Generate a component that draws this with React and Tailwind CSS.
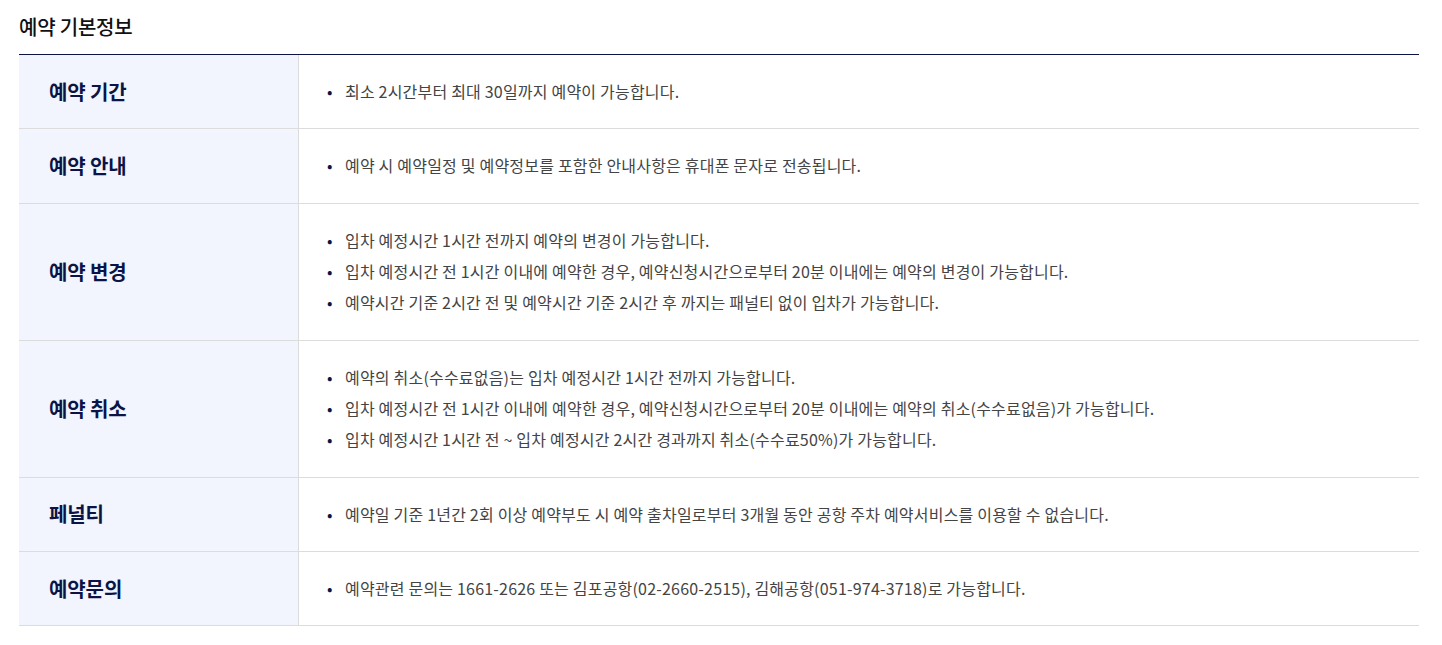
const rows = [
  { th: '예약 기간', items: ['최소 2시간부터 최대 30일까지 예약이 가능합니다.'] },
  { th: '예약 안내', items: ['예약 시 예약일정 및 예약정보를 포함한 안내사항은 휴대폰 문자로 전송됩니다.'] },
  {
    th: '예약 변경',
    items: [
      '입차 예정시간 1시간 전까지 예약의 변경이 가능합니다.',
      '입차 예정시간 전 1시간 이내에 예약한 경우, 예약신청시간으로부터 20분 이내에는 예약의 변경이 가능합니다.',
      '예약시간 기준 2시간 전 및 예약시간 기준 2시간 후 까지는 패널티 없이 입차가 가능합니다.',
    ],
  },
  {
    th: '예약 취소',
    items: [
      '예약의 취소(수수료없음)는 입차 예정시간 1시간 전까지 가능합니다.',
      '입차 예정시간 전 1시간 이내에 예약한 경우, 예약신청시간으로부터 20분 이내에는 예약의 취소(수수료없음)가 가능합니다.',
      '입차 예정시간 1시간 전 ~ 입차 예정시간 2시간 경과까지 취소(수수료50%)가 가능합니다.',
    ],
  },
  { th: '페널티', items: ['예약일 기준 1년간 2회 이상 예약부도 시 예약 출차일로부터 3개월 동안 공항 주차 예약서비스를 이용할 수 없습니다.'] },
  { th: '예약문의', items: ['예약관련 문의는 1661-2626 또는 김포공항(02-2660-2515), 김해공항(051-974-3718)로 가능합니다.'] },
]

const InfoRow = ({ row }) => (
  <div className="flex border-b border-[#dcdcdc]">
    <div className="w-[280px] shrink-0 bg-[#f2f5fd] border-r border-[#dcdcdc] flex items-center pl-[30px]">
      <span className="text-[20px] font-bold text-[#0b1445] tracking-[-0.1px]">{row.th}</span>
    </div>
    <ul className="flex-1 py-[21px] pl-[28px]">
      {row.items.map(item => (
        <li key={item} className="flex text-[16px] leading-[31.33px] text-[#444] tracking-[0.2px]">
          <span className="w-[18px] shrink-0 text-[#0b1445]">•</span>
          <span>{item}</span>
        </li>
      ))}
    </ul>
  </div>
)

export default function App() {
  return (
    <div className="bg-white px-[19px] pt-[12px] pb-[19px] font-['Noto_Sans_CJK_KR',sans-serif] w-[1438px]">
      <h2 className="text-[20px] font-medium text-[#111] tracking-[-0.2px] leading-[30px] mb-[12px]">예약 기본정보</h2>
      <div className="border-t border-[#0b1445]">
        {rows.map(row => (
          <InfoRow key={row.th} row={row} />
        ))}
      </div>
    </div>
  )
}
